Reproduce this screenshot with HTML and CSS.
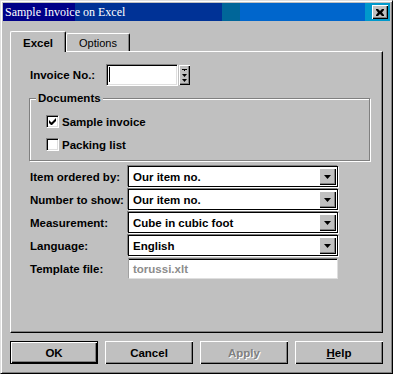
FILE: index.html
```html
<!DOCTYPE html>
<html lang="en">
<head>
    <meta charset="UTF-8">
    <title>Sample Invoice on Excel</title>
    <link rel="stylesheet" href="styles.css">
</head>
<body>
    <div class="window">
        <!-- Title bar -->
        <div class="titlebar">
            <span class="title">Sample Invoice on Excel</span>
            <span class="close-btn">
                <svg width="8" height="7" viewBox="0 0 8 7"><path d="M0 0h2l2 2 2-2h2v1L6 3.5 8 6v1H6L4 5 2 7H0V6l2-2.5L0 1z" fill="#000"/></svg>
            </span>
        </div>

        <div class="dialog">
            <!-- Tabs -->
            <div class="tabs">
                <div class="tab active">Excel</div>
                <div class="tab tab-options">Options</div>
            </div>

            <div class="panel">
                <div class="invoice-row">
                    <span class="invoice-label">Invoice No.:</span>
                    <div class="textbox"><span class="caret"></span></div>
                    <div class="spinner">
                        <svg width="5" height="14" viewBox="0 0 5 14">
                            <path d="M0 1h5v1H3v1H2V2H0z" fill="#000"/>
                            <path d="M0 6h5l-2.5 3z" fill="#000"/>
                            <path d="M0 11h5l-2.5 3z" fill="#000"/>
                        </svg>
                    </div>
                </div>

                <!-- Documents group -->
                <div class="group">
                    <div class="legend">Documents</div>
                    <div class="check-row">
                        <span class="checkbox">
                            <svg width="7" height="7" viewBox="0 0 7 7"><path d="M0 2v3l2 2h1l4-4V0L2.5 4.5z" fill="#000"/></svg>
                        </span>
                        Sample invoice
                    </div>
                    <div class="check-row">
                        <span class="checkbox"></span>
                        Packing list
                    </div>
                </div>

                <div class="fields">
                    <div class="field-row">
                        <span class="field-label">Item ordered by:</span>
                        <div class="combo"><span>Our item no.</span><span class="drop-btn"><svg width="7" height="4" viewBox="0 0 7 4"><path d="M0 0h7L3.5 4z" fill="#000"/></svg></span></div>
                    </div>
                    <div class="field-row">
                        <span class="field-label">Number to show:</span>
                        <div class="combo"><span>Our item no.</span><span class="drop-btn"><svg width="7" height="4" viewBox="0 0 7 4"><path d="M0 0h7L3.5 4z" fill="#000"/></svg></span></div>
                    </div>
                    <div class="field-row">
                        <span class="field-label">Measurement:</span>
                        <div class="combo"><span>Cube in cubic foot</span><span class="drop-btn"><svg width="7" height="4" viewBox="0 0 7 4"><path d="M0 0h7L3.5 4z" fill="#000"/></svg></span></div>
                    </div>
                    <div class="field-row">
                        <span class="field-label">Language:</span>
                        <div class="combo"><span>English</span><span class="drop-btn"><svg width="7" height="4" viewBox="0 0 7 4"><path d="M0 0h7L3.5 4z" fill="#000"/></svg></span></div>
                    </div>
                    <div class="field-row">
                        <span class="field-label">Template file:</span>
                        <div class="readonly">torussi.xlt</div>
                    </div>
                </div>
            </div>

            <!-- Buttons -->
            <div class="buttons">
                <div class="btn default">OK</div>
                <div class="btn">Cancel</div>
                <div class="btn disabled">Apply</div>
                <div class="btn"><span><u>H</u>elp</span></div>
            </div>
        </div>
    </div>
</body>
</html>
```

FILE: styles.css
```css
body {
    margin: 0;
    font-family: "Liberation Sans", Arial, sans-serif;
    font-size: 11.5px;
    font-weight: bold;
    color: #000;
}

.window {
    width: 393px;
    height: 374px;
    box-sizing: border-box;
    background: #c0c0c0;
    border: 1px solid;
    border-color: #dfdfdf #000 #000 #dfdfdf;
    box-shadow: inset 1px 1px #fff, inset -1px -1px #808080;
    padding: 2px;
}

/* Title bar */
.titlebar {
    height: 18px;
    display: flex;
    align-items: center;
    justify-content: space-between;
    padding-left: 2px;
    background: linear-gradient(to right,
        #000088 0, #000088 72px,
        #003296 72px, #003296 219px,
        #006699 219px, #006699 237px,
        #0066cc 237px, #0066cc 362px,
        #0099cc 362px);
}

.title {
    font-family: "Liberation Serif", "Times New Roman", serif;
    font-weight: normal;
    font-size: 12px;
    color: #fff;
}

.close-btn {
    width: 16px;
    height: 14px;
    margin-right: 2px;
    box-sizing: border-box;
    background: #c0c0c0;
    box-shadow: inset 1px 1px #fff, inset -1px -1px #000, inset -2px -2px #808080;
    display: flex;
    align-items: center;
    justify-content: center;
}

.dialog {
    padding: 10px 7px 0;
}

/* Tabs */
.tabs {
    display: flex;
    align-items: flex-end;
    height: 20px;
}

.tab {
    box-sizing: border-box;
    height: 18px;
    width: 64px;
    border-top: 1px solid #fff;
    border-left: 1px solid #fff;
    border-right: 1px solid #000;
    border-radius: 2px 2px 0 0;
    box-shadow: inset -1px 0 #808080;
    display: flex;
    align-items: center;
    justify-content: center;
    font-weight: normal;
    font-size: 11px;
}

.tab.active {
    width: 56px;
    height: 21px;
    margin-bottom: -1px;
    padding-top: 1px;
    position: relative;
    z-index: 1;
    background: #c0c0c0;
    font-weight: bold;
    font-size: 11.5px;
}

.panel {
    box-sizing: border-box;
    height: 282px;
    border: 1px solid;
    border-color: #fff #000 #000 #fff;
    box-shadow: inset -1px -1px #808080;
    padding: 12px 0 0 19px;
}

/* Invoice number */
.invoice-row {
    display: flex;
    align-items: center;
    height: 22px;
}

.invoice-label {
    width: 76px;
}

.textbox {
    width: 72px;
    height: 22px;
    box-sizing: border-box;
    background: #fff;
    border: 1px solid;
    border-color: #808080 #fff #fff #808080;
    box-shadow: inset 1px 1px #000, inset -1px -1px #dfdfdf;
    padding: 2px 0 0 2px;
}

.caret {
    display: block;
    width: 1px;
    height: 15px;
    background: #000;
}

.spinner {
    width: 11px;
    height: 20px;
    margin-left: 1px;
    box-sizing: border-box;
    box-shadow: inset 1px 1px #fff, inset -1px -1px #000, inset -2px -2px #808080;
    display: flex;
    align-items: center;
    justify-content: center;
}

/* Documents group */
.group {
    width: 341px;
    height: 63px;
    box-sizing: border-box;
    margin: 12px 0 0 -1px;
    border: 1px solid #808080;
    box-shadow: inset 1px 1px #fff, 1px 1px #fff;
    padding-left: 16px;
}

.legend {
    width: fit-content;
    margin: -8px 0 0 -10px;
    padding: 0 2px;
    line-height: 14px;
    background: #c0c0c0;
}

.check-row {
    display: flex;
    align-items: center;
    height: 13px;
    margin-top: 10px;
}

.checkbox {
    width: 13px;
    height: 13px;
    box-sizing: border-box;
    margin-right: 3px;
    background: #fff;
    border: 1px solid;
    border-color: #808080 #fff #fff #808080;
    box-shadow: inset 1px 1px #000, inset -1px -1px #dfdfdf;
    display: flex;
    align-items: center;
    justify-content: center;
}

/* Combo rows */
.fields {
    margin-top: 5px;
    display: flex;
    flex-direction: column;
    gap: 2px;
}

.field-row {
    display: flex;
    align-items: center;
    height: 21px;
}

.field-label {
    width: 98px;
}

.combo {
    width: 210px;
    height: 21px;
    box-sizing: border-box;
    background: #fff;
    border: 1px solid #000;
    box-shadow: -1px -1px 0 #808080, 1px 1px 0 #fff;
    display: flex;
    align-items: center;
    justify-content: space-between;
    padding-left: 4px;
}

.drop-btn {
    width: 17px;
    height: 17px;
    margin-right: 1px;
    box-sizing: border-box;
    background: #c0c0c0;
    box-shadow: inset 1px 1px #fff, inset -1px -1px #000, inset -2px -2px #808080;
    display: flex;
    align-items: center;
    justify-content: center;
}

.readonly {
    width: 210px;
    height: 21px;
    box-sizing: border-box;
    background: #fff;
    border-top: 1px solid #808080;
    border-left: 1px solid #a0a0a0;
    border-right: 1px solid #dfdfdf;
    border-bottom: 1px solid #dfdfdf;
    box-shadow: inset 0 1px #000;
    display: flex;
    align-items: center;
    padding-left: 4px;
    color: #8c8c8c;
}

/* Bottom buttons */
.buttons {
    display: flex;
    gap: 7px;
    margin-top: 8px;
}

.btn {
    width: 88px;
    height: 23px;
    box-sizing: border-box;
    box-shadow: inset 1px 1px #fff, inset -1px -1px #000, inset -2px -2px #808080;
    display: flex;
    align-items: center;
    justify-content: center;
}

.btn.default {
    border: 1px solid #000;
    box-shadow: inset 1px 1px #fff, inset -1px -1px #000, inset -2px -2px #808080;
}

.btn.disabled {
    color: #808080;
    text-shadow: 1px 1px #fff;
}
```
